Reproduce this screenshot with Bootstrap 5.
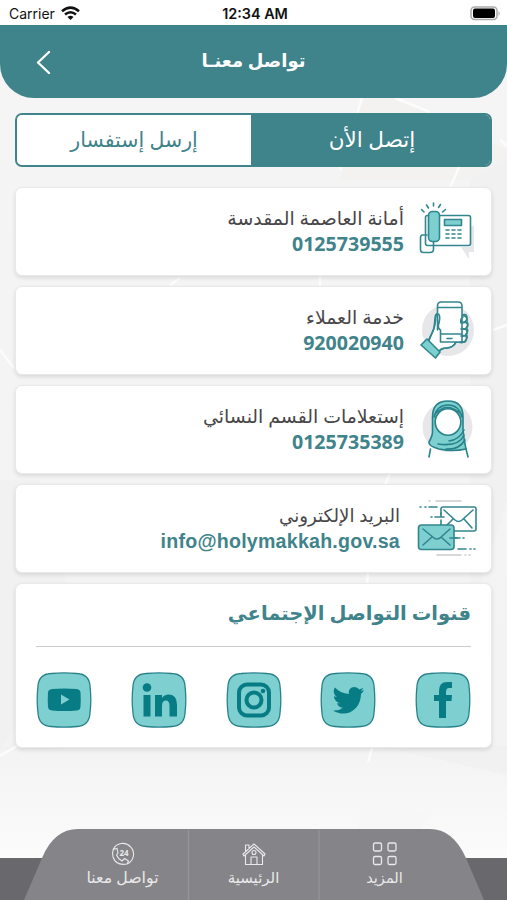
<!DOCTYPE html>
<html lang="ar" dir="rtl">
<head>
<meta charset="utf-8">
<meta name="viewport" content="width=device-width, initial-scale=1">
<title>تواصل معنا</title>
<link href="https://cdn.jsdelivr.net/npm/bootstrap@5.3.0/dist/css/bootstrap.min.css" rel="stylesheet">
<style>
:root{--teal:#3f838b;--aqua:#7dcfd0;--deep:#087c84}
body{font-family:"Noto Sans","DejaVu Sans",sans-serif;background:#f6f6f6;color:#444}
.screen{height:900px;overflow:hidden}
.backdrop{z-index:0}
.layer{z-index:1}
.status{height:25px;font-family:Inter,sans-serif;color:#111;font-size:14px;padding:2px 6px 0 9px}
.clock{font-size:14.4px}
.status-side{width:90px}
.topbar{height:73px;background:var(--teal);border-radius:0 0 34px 34px;padding:0 35px}
.topbar h1{font-size:18px;line-height:28px;margin:0 0 3px}
.switcher{height:54px;margin:15px 15px 0;border:2px solid var(--teal);border-radius:7px;overflow:hidden;font-size:20.5px}
.switcher button{border:0;border-radius:0;font-size:inherit;line-height:1;padding:0 0 2px}
.switcher .tab-on{width:239px;background:var(--teal);color:#fff;font-size:21.5px;padding-left:3px}
.switcher .tab-off{background:#fff;color:var(--teal)}
.stack{padding:20px 15px 0;gap:10px}
.tile{border:1px solid #e9e9e9;border-radius:7px;box-shadow:0 2px 4px #0000001c;background:#fff}
.contact{height:89px;padding:0 14px 1px 0;gap:13px}
.contact-mail{padding-right:13px}
.contact-mail .label,.contact-mail .value{margin-right:-1px;margin-left:0}
.contact-mail{gap:14px}
.pic{width:60px;height:70px}
.pic-mail{width:65px}
.label{line-height:26px;white-space:nowrap;color:#484648;font-size:18.9px}
.label-mail{font-size:18.2px}
.value{line-height:26px;font-weight:700;color:var(--teal);font-size:19.6px}
.email{font-family:"Liberation Sans",sans-serif;font-size:19.6px;letter-spacing:.23px}
.social{height:165px;padding:13px 20px 0}
.social h2{color:var(--teal);font-size:19.5px;line-height:32px;margin:0 0 17px}
.social hr{margin:0 0 25px;border-color:#ccc;opacity:1}
.tabbar{height:71px;padding:0 57px}
.tabbar a{color:#e9e9ea;padding-top:12px;font-size:15.8px;line-height:21px;width:131px}
.tabbar-shape{z-index:-1}
</style>
<script src="https://cdn.jsdelivr.net/npm/bootstrap@5.3.0/dist/js/bootstrap.bundle.min.js"></script>
</head>
<body>
<div class="screen position-relative d-flex flex-column">
  <svg class="backdrop position-absolute top-0 start-0" width="507" height="900" viewBox="0 0 507 900" aria-hidden="true">
    <defs><linearGradient id="fade" x2="0" y2="1"><stop offset="0" stop-color="#f6f5f5"/><stop offset=".83" stop-color="#f3f3f3"/><stop offset=".95" stop-color="#fbfbfb"/></linearGradient></defs>
    <rect width="507" height="900" fill="url(#fade)"/>
    <path d="M362 98H400L507 150V180H340Z" fill="#f3f2f1"/>
    <path d="M0 480 40 480 80 640 0 750ZM470 180 507 160V500L470 620Z" fill="#f1f1f1"/>
    <path d="M60 750H0L20 742ZM375 745H507V775Z" fill="#f1f1f1"/>
    <path d="M365 798 430 815 400 860H350Z" fill="#f7f7f7"/>
    <path d="M362 98 340 170M395 98 430 112M500 140 507 146M460 165 450 188M0 756 20 744M373 745 368 762M180 278 170 285M320 275V286M390 473 385 485M368 572 367 584M0 350 14 368M493 330 507 325" fill="none" stroke="#fcfcfc" stroke-width="2.500"/>
  </svg>

  <div class="status layer bg-white d-flex align-items-center justify-content-between flex-shrink-0" dir="ltr">
    <div class="status-side d-flex align-items-center gap-1">Carrier
      <svg width="19" height="15" viewBox="0 0 19 15" fill="none" stroke="#111" stroke-width="2.500" style="margin-left:2px"><path d="M1 5.300Q9.500-2 18 5.300M4 8.500Q9.500 4 15 8.500"/><path d="M9.500 14 6.500 11Q9.500 8.500 12.500 11Z" fill="#111" stroke="none"/></svg>
    </div>
    <div class="clock fw-semibold">12:34 AM</div>
    <div class="status-side text-end d-flex justify-content-end">
      <svg width="31" height="16" viewBox="0 0 31 16"><rect x="1" y="1" width="26" height="12.500" rx="3.500" fill="#fff" stroke="#aaa" stroke-width="1.500"/><rect x="3" y="2.500" width="22" height="9.500" rx="2" fill="#000"/><path d="M28.500 5Q31 7.500 28.500 10Z" fill="#aaa"/></svg>
    </div>
  </div>

  <header class="topbar layer d-flex align-items-center justify-content-between text-white flex-shrink-0" dir="ltr">
    <svg width="16" height="24" viewBox="0 0 16 24" fill="none" stroke="#fff" stroke-width="2.300" stroke-linecap="round" stroke-linejoin="round"><path d="M14 2 3 12.500 14 23"/></svg>
    <h1 class="fw-bold" dir="rtl">تواصل معنـا</h1>
    <span style="width:16px"></span>
  </header>

  <div class="switcher layer d-flex flex-shrink-0">
    <button class="btn tab-on flex-shrink-0">إتصل الأن</button>
    <button class="btn tab-off flex-fill">إرسل إستفسار</button>
  </div>

  <main class="stack layer d-flex flex-column">
    <section class="tile contact d-flex align-items-center">
      <svg class="pic" viewBox="417 196 60 70" fill="none" stroke="#32868e" stroke-width="1.600" stroke-linecap="round" stroke-linejoin="round">
        <path d="M430 247H461L469 259V252H474V226H470V247Z" fill="#e7e7ea" stroke="none"/>
        <rect x="425.500" y="215.500" width="45" height="30" rx="2" fill="#fff"/>
        <path d="M427 235H422.500Q420.500 235 420.500 238V249Q420.500 252.500 423.500 252.500H430Q433.500 252.500 433.500 249V241"/>
        <rect x="428.500" y="211.500" width="11" height="30" rx="4" fill="var(--aqua)"/>
        <rect x="444.500" y="219.500" width="17" height="6" fill="var(--aqua)"/>
        <path d="M446 230H449M452 230H455M458 230H461M446 234H449M452 234H455M458 234H461M446 238H449M452 238H455M458 238H461M424 212 421.500 209.500M428.500 208 426.500 205M433.500 206V203M438.500 207.500 440.500 204.500M442.500 212 445.500 209.500"/>
      </svg>
      <div class="d-flex flex-column align-items-start">
        <div class="label">أمانة العاصمة المقدسة</div>
        <div class="value">0125739555</div>
      </div>
    </section>

    <section class="tile contact d-flex align-items-center">
      <svg class="pic" viewBox="417 295 60 70" fill="none" stroke="#32868e" stroke-width="1.600" stroke-linecap="round" stroke-linejoin="round">
        <circle cx="448" cy="330" r="26" fill="#e7e7ea" stroke="none"/>
        <path d="M439 313Q435 313 435 319L434 328 430 338 427 341 439 352Q441 348 447 348Q453 348 456 342H462Q466 343 466.500 339Q468 336 466 334Q469 331 466.500 328Q469 325 467 322Q468 316 462 315Z" fill="#fff"/>
        <rect x="437.500" y="302" width="24.500" height="40" rx="4" fill="#fff" stroke="none"/>
        <path d="M437.500 330V306Q437.500 302 441.500 302H458Q462 302 462 306V342H440.500V334H462M438 307.500H462M447 338.500H452M440.500 334V330Q437 328 439 323Q441 314 437.500 313.500Q435.500 314 435.500 320Q435 329 430 337L429 341M462 315Q467 313 467 318Q467 322 461 323Q460 319 463 317M462 323Q468 321 467.500 326Q466 330 461 329M461 329Q468 328 467 333Q466 337 461 336M461 336Q467 334 466.500 339Q464 344 459 342M456 342Q454 347 447 348 441 348 439 351"/>
        <path d="M427 339 440 352 435.500 358 421 345Z" fill="var(--aqua)"/>
      </svg>
      <div class="d-flex flex-column align-items-start">
        <div class="label">خدمة العملاء</div>
        <div class="value">920020940</div>
      </div>
    </section>

    <section class="tile contact d-flex align-items-center">
      <svg class="pic" viewBox="417 394 60 70" fill="none" stroke="#28828a" stroke-width="1.600" stroke-linecap="round" stroke-linejoin="round">
        <circle cx="447.500" cy="427" r="25" fill="#e7e7ea" stroke="none"/>
        <path d="M432.500 417Q432.500 401 448 401Q463 401 463 417V430Q464 440 466 449Q453 452 439 449 428 446 429 442Q433 435 432.500 430Z" fill="var(--aqua)"/>
        <path d="M434 417Q437 405 448 405Q459 405 462 417M436 413Q447 402 460 413M464 430Q459 440 449 441M464 435Q459 447 438 444M465 440Q459 450 446 449M430.500 449 429 457M466 449 468 457"/>
        <ellipse cx="448" cy="422" rx="12.800" ry="13.200" fill="#fff"/>
      </svg>
      <div class="d-flex flex-column align-items-start">
        <div class="label">إستعلامات القسم النسائي</div>
        <div class="value">0125735389</div>
      </div>
    </section>

    <section class="tile contact contact-mail d-flex align-items-center">
      <svg class="pic pic-mail" viewBox="413 493 65 70" fill="none" stroke="#32868e" stroke-width="1.600" stroke-linecap="round" stroke-linejoin="round">
        <path d="M429 501H430M436 501H461M437 555H461M465 555H466M469 555H470" stroke="#ccc"/>
        <rect x="441" y="507" width="35" height="24" rx="2" fill="#fff"/>
        <path d="M444 510 455 520Q458.500 523 462 520L473 510M444 528 453 519M472 528 464 519"/>
        <path d="M438 515H444V524H438Z" fill="#fff" stroke="none"/>
        <path d="M441 513V517M441 520V524M420 507H421M425 507H426M429 507H437M431 517H432M435 517H444M455 538H460M463 538H464M458 549H466M470 549H471M474 549H475"/>
        <rect x="418.500" y="525" width="35.500" height="24.500" rx="3" fill="var(--aqua)"/>
        <path d="M423 529 434 538Q437 540 440 538L450 529M423 545 432 537M450 545 441 537M450 538H457"/>
      </svg>
      <div class="d-flex flex-column align-items-start">
        <div class="label label-mail">البريد الإلكتروني</div>
        <div class="value email" dir="ltr">info@holymakkah.gov.sa</div>
      </div>
    </section>

    <section class="tile social">
      <h2 class="fw-bold">قنوات التواصل الإجتماعي</h2>
      <hr>
      <svg width="0" height="0" class="position-absolute"><defs><path id="plate" d="M15 1.500Q28 .3 41 1.500C49 2 53.500 6 54 14Q55.600 28 54 41C53.500 50 49 54 41 54.500Q28 55.700 15 54.500C7 54 2.500 50 2 41Q.4 28 2 14C2.500 6 7 2 15 1.500Z" fill="#7dcfd0" stroke="#28828a" stroke-width="1.300"/></defs></svg>
      <div class="d-flex justify-content-between">
        <svg width="56" height="56" viewBox="0 0 56 56"><use href="#plate"/><path d="M24 46V29H19V23H24V19Q24 10 32 10H37V16H34Q31 16 31 20V23H37L36.500 29H31V46Z" fill="#087c84"/></svg>
        <svg width="56" height="56" viewBox="0 0 56 56"><use href="#plate"/><path d="M44 18Q42 19 40.500 19.200Q42.500 18 43.200 16Q41 17 39.200 17.400C34 12 27.500 16.500 29 22Q20 21 15 15.500C12.500 19 14 23 17 25Q15.500 25 14 24C14 28 17 30.500 20 31.200Q18.500 31.500 17 31.200Q18.500 35.500 23 35.700Q19 39 13 38.500C27 47 41 37 41 22Q43 20.500 44 18Z" fill="#087c84"/></svg>
        <svg width="56" height="56" viewBox="0 0 56 56" fill="none" stroke="#087c84" stroke-width="4"><use href="#plate"/><rect x="13" y="12.500" width="30" height="31" rx="8"/><circle cx="28" cy="28" r="7.500"/><circle cx="37" cy="19" r="2.300" fill="#087c84" stroke="none"/></svg>
        <svg width="56" height="56" viewBox="0 0 56 56" fill="#087c84"><use href="#plate"/><circle cx="16" cy="15.500" r="4.300"/><path d="M12.500 23H19.500V44.500H12.500ZM24 23H31V26Q33 22.500 38 22.500Q46 22.500 46 33V44.500H38.500V34Q38.500 28.500 35 28.500Q31 28.500 31 34V44.500H24Z"/></svg>
        <svg width="56" height="56" viewBox="0 0 56 56"><use href="#plate"/><path d="M16 17Q28 16 41 17 44 17.500 44.500 20 45 28 44.500 35 44 38 41 38.500 28 39.500 16 38.500 12.500 38 12 35 11.500 28 12 20 12.500 17.500 16 17Z" fill="#087c84"/><path d="M25 22.500 33.500 27.500 25 32.500Z" fill="#7dcfd0"/></svg>
      </div>
    </section>
  </main>

  <nav class="tabbar layer position-relative d-flex mt-auto flex-shrink-0">
    <svg class="tabbar-shape position-absolute top-0 start-0" width="507" height="71" viewBox="0 0 507 71" aria-hidden="true"><path d="M0 29H507V71H0Z" fill="#69686d"/><path d="M24 71 42 29Q54 0 78 0H430Q453 0 466 29L484 71Z" fill="#858488"/><path d="M188.500 1V71M319 1V71" stroke="#96959a" stroke-width="1.300"/></svg>
    <a href="#" class="text-decoration-none d-flex flex-column align-items-center">
      <svg width="26" height="26" viewBox="0 0 26 26" fill="none" stroke="#e9e9ea" stroke-width="1.300"><rect x="1.500" y="2" width="8" height="8" rx="1.500"/><rect x="16" y="2" width="8" height="8" rx="1.500"/><rect x="1.500" y="15.500" width="8" height="8" rx="1.500"/><rect x="16" y="15.500" width="8" height="8" rx="1.500"/></svg>
      <span style="font-size:14.6px">المزيد</span>
    </a>
    <a href="#" class="text-decoration-none d-flex flex-column align-items-center">
      <svg width="26" height="26" viewBox="0 0 26 26" fill="none" stroke="#e9e9ea" stroke-width="1.100" stroke-linejoin="round"><path d="M2 13 13 3 24 13 23 15 13 6 3 15ZM4.500 13.500V23.500H21.500V13.500M4.500 11V4H8V8M10 23.500V16H16V23.500"/><circle cx="13" cy="11.500" r="2"/></svg>
      <span style="font-size:15px">الرئيسية</span>
    </a>
    <a href="#" class="text-decoration-none d-flex flex-column align-items-center">
      <svg width="26" height="26" viewBox="0 0 26 26" fill="none" stroke="#e9e9ea" stroke-width="1.100"><path d="M3.200 8.500A10.700 10.700 0 1 1 17 23M3.200 8.500 7 7.500 8 12 6.500 14Q8 18 12 20L14.500 17.500 18.500 20 17 23Q6 25 3 16 2 12 3.200 8.500"/><text x="9.500" y="14.500" font-size="8" font-weight="700" fill="#e9e9ea" stroke="none" direction="ltr">24</text></svg>
      <span>تواصل معنا</span>
    </a>
  </nav>
</div>
</body>
</html>
